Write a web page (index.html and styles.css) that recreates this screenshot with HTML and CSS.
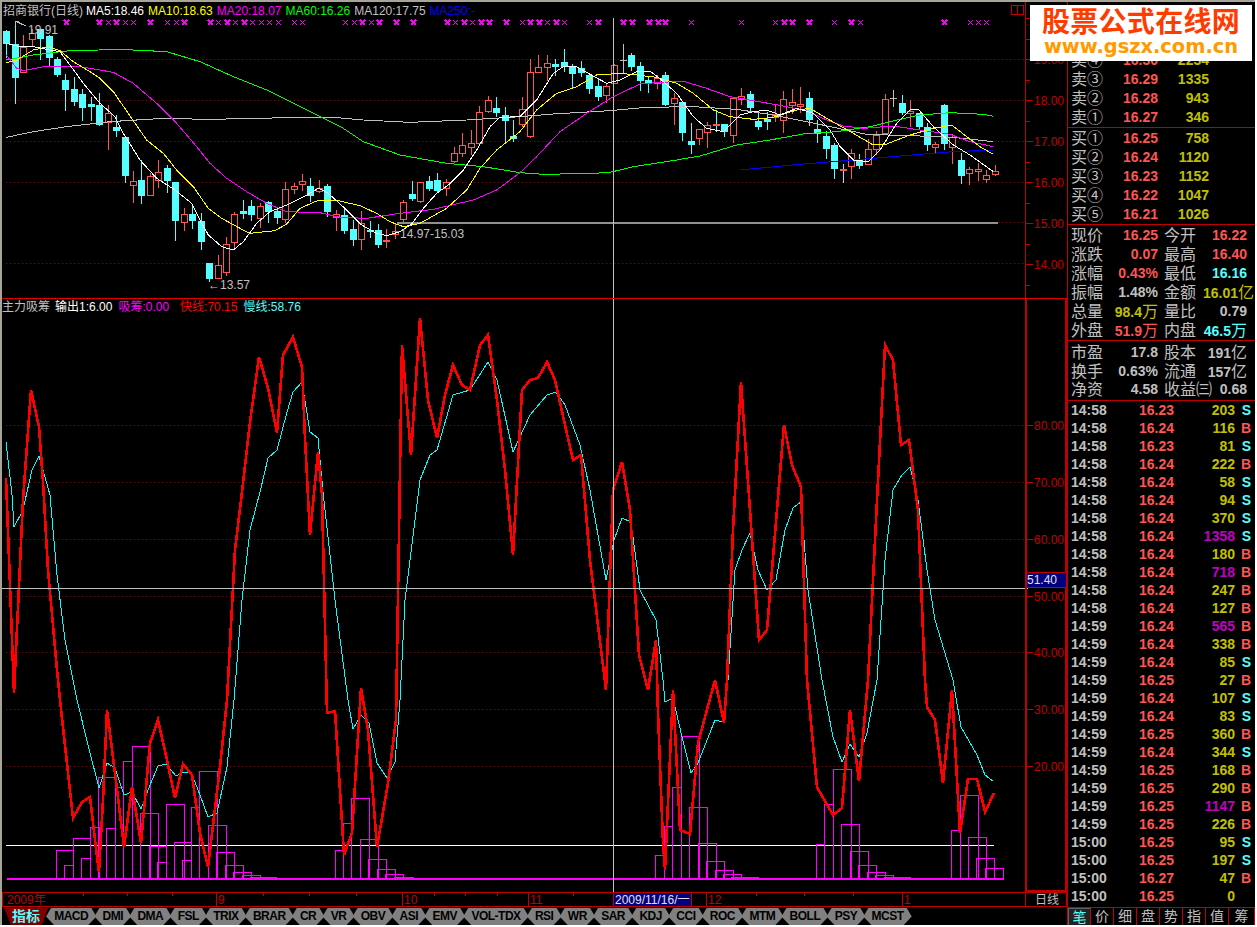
FILE: index.html
```html
<!DOCTYPE html>
<html lang="zh-CN">
<head>
    <meta charset="UTF-8">
    <title>招商银行(日线)</title>
    <link rel="stylesheet" href="styles.css">
</head>
<body>
    <div class="screen">
        <div class="main">
            <div class="charts">
                <div class="pane">
                    <svg id="pricePane" class="chart" width="1065" height="296" viewBox="2 2 1065 296"></svg>
                    <div class="legend price-legend">
                        <span class="gray">招商银行(日线)</span>
                        <span class="white">MA5:18.46</span>
                        <span class="yellow">MA10:18.63</span>
                        <span class="magenta">MA20:18.07</span>
                        <span class="green">MA60:16.26</span>
                        <span class="gray">MA120:17.75</span>
                        <span class="blue">MA250:-</span>
                    </div>
                    <div class="split-icon"><i></i><i></i></div>
                </div>
                <div class="pane">
                    <svg id="indicatorPane" class="chart" width="1065" height="594" viewBox="2 298 1065 594"></svg>
                    <div class="legend indicator-legend">
                        <span class="gray">主力吸筹</span>
                        <span class="white">输出1:6.00</span>
                        <span class="magenta">吸筹:0.00</span>
                        <span class="red">快线:70.15</span>
                        <span class="cyan">慢线:58.76</span>
                    </div>
                </div>
                <svg id="datePane" class="chart" width="1065" height="15" viewBox="2 892 1065 15"></svg>
            </div>

            <div class="side">
                <div class="book sell">
                    <div class="book-row"><span>卖⑤</span></div>
                    <div class="book-row"><span>卖④</span><b class="red">16.30</b><b class="olive">2234</b></div>
                    <div class="book-row"><span>卖③</span><b class="red">16.29</b><b class="olive">1335</b></div>
                    <div class="book-row"><span>卖②</span><b class="red">16.28</b><b class="olive">943</b></div>
                    <div class="book-row"><span>卖①</span><b class="red">16.27</b><b class="olive">346</b></div>
                </div>
                <div class="book buy">
                    <div class="book-row"><span>买①</span><b class="red">16.25</b><b class="olive">758</b></div>
                    <div class="book-row"><span>买②</span><b class="red">16.24</b><b class="olive">1120</b></div>
                    <div class="book-row"><span>买③</span><b class="red">16.23</b><b class="olive">1152</b></div>
                    <div class="book-row"><span>买④</span><b class="red">16.22</b><b class="olive">1047</b></div>
                    <div class="book-row"><span>买⑤</span><b class="red">16.21</b><b class="olive">1026</b></div>
                </div>
                <div class="quote">
                    <span>现价</span><b class="red">16.25</b><span>今开</span><b class="red">16.22</b>
                    <span>涨跌</span><b class="red">0.07</b><span>最高</span><b class="red">16.40</b>
                    <span>涨幅</span><b class="red">0.43%</b><span>最低</span><b class="cyan">16.16</b>
                    <span>振幅</span><b class="gray">1.48%</b><span>金额</span><b class="olive">16.01<em>亿</em></b>
                    <span>总量</span><b class="olive">98.4<em>万</em></b><span>量比</span><b class="gray">0.79</b>
                    <span>外盘</span><b class="red">51.9<em>万</em></b><span>内盘</span><b class="cyan">46.5<em>万</em></b>
                </div>
                <div class="quote fund">
                    <span>市盈</span><b class="gray">17.8</b><span>股本</span><b class="gray">191<em>亿</em></b>
                    <span>换手</span><b class="gray">0.63%</b><span>流通</span><b class="gray">157<em>亿</em></b>
                    <span>净资</span><b class="gray">4.58</b><span>收益㈢</span><b class="gray">0.68</b>
                </div>
                <div class="ticks">
                    <div class="tick"><b>14:58</b><b class="red">16.23</b><b class="olive">203</b><b class="cyan">S</b></div>
                    <div class="tick"><b>14:58</b><b class="red">16.24</b><b class="olive">116</b><b class="red">B</b></div>
                    <div class="tick"><b>14:58</b><b class="red">16.23</b><b class="olive">81</b><b class="cyan">S</b></div>
                    <div class="tick"><b>14:58</b><b class="red">16.24</b><b class="olive">222</b><b class="red">B</b></div>
                    <div class="tick"><b>14:58</b><b class="red">16.24</b><b class="olive">58</b><b class="cyan">S</b></div>
                    <div class="tick"><b>14:58</b><b class="red">16.24</b><b class="olive">94</b><b class="cyan">S</b></div>
                    <div class="tick"><b>14:58</b><b class="red">16.24</b><b class="olive">370</b><b class="cyan">S</b></div>
                    <div class="tick"><b>14:58</b><b class="red">16.24</b><b class="purple">1358</b><b class="cyan">S</b></div>
                    <div class="tick"><b>14:58</b><b class="red">16.24</b><b class="olive">180</b><b class="red">B</b></div>
                    <div class="tick"><b>14:58</b><b class="red">16.24</b><b class="purple">718</b><b class="red">B</b></div>
                    <div class="tick"><b>14:58</b><b class="red">16.24</b><b class="olive">247</b><b class="red">B</b></div>
                    <div class="tick"><b>14:58</b><b class="red">16.24</b><b class="olive">127</b><b class="red">B</b></div>
                    <div class="tick"><b>14:59</b><b class="red">16.24</b><b class="purple">565</b><b class="red">B</b></div>
                    <div class="tick"><b>14:59</b><b class="red">16.24</b><b class="olive">338</b><b class="red">B</b></div>
                    <div class="tick"><b>14:59</b><b class="red">16.24</b><b class="olive">85</b><b class="cyan">S</b></div>
                    <div class="tick"><b>14:59</b><b class="red">16.25</b><b class="olive">27</b><b class="red">B</b></div>
                    <div class="tick"><b>14:59</b><b class="red">16.24</b><b class="olive">107</b><b class="cyan">S</b></div>
                    <div class="tick"><b>14:59</b><b class="red">16.24</b><b class="olive">83</b><b class="cyan">S</b></div>
                    <div class="tick"><b>14:59</b><b class="red">16.25</b><b class="olive">360</b><b class="red">B</b></div>
                    <div class="tick"><b>14:59</b><b class="red">16.24</b><b class="olive">344</b><b class="cyan">S</b></div>
                    <div class="tick"><b>14:59</b><b class="red">16.25</b><b class="olive">168</b><b class="red">B</b></div>
                    <div class="tick"><b>14:59</b><b class="red">16.25</b><b class="olive">290</b><b class="red">B</b></div>
                    <div class="tick"><b>14:59</b><b class="red">16.25</b><b class="purple">1147</b><b class="red">B</b></div>
                    <div class="tick"><b>14:59</b><b class="red">16.25</b><b class="olive">226</b><b class="red">B</b></div>
                    <div class="tick"><b>15:00</b><b class="red">16.25</b><b class="olive">95</b><b class="cyan">S</b></div>
                    <div class="tick"><b>15:00</b><b class="red">16.25</b><b class="olive">197</b><b class="cyan">S</b></div>
                    <div class="tick"><b>15:00</b><b class="red">16.27</b><b class="olive">47</b><b class="red">B</b></div>
                    <div class="tick"><b>15:00</b><b class="red">16.25</b><b class="olive">0</b></div>
                </div>
            </div>
        </div>

        <div class="bottom">
            <div class="tabs">
                <a class="tab active">指标</a>
                <a class="tab">MACD</a>
                <a class="tab">DMI</a>
                <a class="tab">DMA</a>
                <a class="tab">FSL</a>
                <a class="tab">TRIX</a>
                <a class="tab">BRAR</a>
                <a class="tab">CR</a>
                <a class="tab">VR</a>
                <a class="tab">OBV</a>
                <a class="tab">ASI</a>
                <a class="tab">EMV</a>
                <a class="tab">VOL-TDX</a>
                <a class="tab">RSI</a>
                <a class="tab">WR</a>
                <a class="tab">SAR</a>
                <a class="tab">KDJ</a>
                <a class="tab">CCI</a>
                <a class="tab">ROC</a>
                <a class="tab">MTM</a>
                <a class="tab">BOLL</a>
                <a class="tab">PSY</a>
                <a class="tab">MCST</a>
            </div>
            <div class="side-tabs">
                <a class="current">笔</a><a>价</a><a>细</a><a>盘</a><a>势</a><a>指</a><a>值</a><a>筹</a>
            </div>
        </div>

        <div class="logo">
            <div class="logo-title">股票公式在线网</div>
            <div class="logo-url">www.gszx.com.cn</div>
        </div>
    </div>

    <script src="chart.js"></script>
</body>
</html>
```

FILE: styles.css
```css
body {
    margin: 0;
    background-color: #ffffff;
}

.screen {
    position: relative;
    box-sizing: border-box;
    width: 1255px;
    height: 925px;
    border-top: 2px solid #a8a498;
    border-left: 2px solid #a8a498;
    background-color: #000000;
    font-family: "Liberation Sans", "Noto Sans CJK SC", sans-serif;
    overflow: hidden;
}

.main {
    display: flex;
    height: 905px;
}

.charts {
    width: 1065px;
    flex: none;
}

.pane {
    position: relative;
    height: fit-content;
}

.chart {
    display: block;
}

.chart text {
    font-family: "Liberation Sans", "Noto Sans CJK SC", sans-serif;
    font-size: 12px;
}

/* series */
.line {
    fill: none;
    stroke-width: 1;
    shape-rendering: crispEdges;
}
.ma5 { stroke: #ffffff; }
.ma10 { stroke: #ffff00; }
.ma20 { stroke: #ff00ff; }
.ma60 { stroke: #00ff00; }
.ma120 { stroke: #c0c0c0; }
.ma250 { stroke: #0000ff; }
.fast { stroke: #ff0000; stroke-width: 2.6; }
.slow { stroke: #00ffff; }

.grid {
    stroke: #900000;
    stroke-width: 1;
    stroke-dasharray: 1 3;
    shape-rendering: crispEdges;
}
.frame {
    stroke: #c00000;
    fill: none;
    shape-rendering: crispEdges;
}
.split {
    stroke: #e00000;
    stroke-width: 1;
    shape-rendering: crispEdges;
}
.cross {
    stroke: #c0c0c0;
    stroke-width: 1;
    shape-rendering: crispEdges;
}
.support {
    stroke: #909090;
    stroke-width: 2;
    shape-rendering: crispEdges;
}
.base {
    stroke: #ffffff;
    stroke-width: 1;
    shape-rendering: crispEdges;
}
.bar {
    fill: none;
    stroke: #ff00ff;
    stroke-width: 1;
    shape-rendering: crispEdges;
}
.mark {
    stroke: #ff00ff;
    stroke-width: 1;
    shape-rendering: crispEdges;
}
.mark.heavy {
    stroke-width: 1.5;
}

.wick-up { stroke: #ff5555; shape-rendering: crispEdges; }
.wick-down { stroke: #55ffff; shape-rendering: crispEdges; }
.wick-flat { stroke: #c0c0c0; shape-rendering: crispEdges; }
.body-up { fill: #000000; stroke: #ff5555; shape-rendering: crispEdges; }
.body-down { fill: #55ffff; shape-rendering: crispEdges; }

.axis-label { fill: #c00000; }
.note { fill: #c0c0c0; }
.note-line { fill: none; stroke: #c0c0c0; shape-rendering: crispEdges; }
.date-label { fill: #c00000; }
.date-box { fill: #000080; stroke: #c00000; shape-rendering: crispEdges; }
.date-now { fill: #e0e0e0; }
.value-box { fill: #000080; stroke: #c00000; shape-rendering: crispEdges; }
.value-now { fill: #e0e0e0; }
.period { fill: #c0c0c0; }

.legend {
    position: absolute;
    display: flex;
    gap: 6px;
    font-size: 12px;
    line-height: 14px;
    white-space: nowrap;
}
.price-legend { top: 2px; left: 1px; gap: 4px; }
.price-legend span:first-child { margin-right: -1px; }
.indicator-legend { top: 2px; left: 0; }
.indicator-legend span:first-child { margin-right: -1px; }
.indicator-legend .magenta { margin-right: 5px; }

.white { color: #ffffff; }
.gray { color: #c0c0c0; }
.yellow { color: #ffff00; }
.magenta { color: #ff00ff; }
.green { color: #00ff00; }
.blue { color: #0000ff; }
.red { color: #ff5555; }
.cyan { color: #55ffff; }
.olive { color: #c0c000; }
.purple { color: #c000c0; }
.indicator-legend .red { color: #ff0000; }

.split-icon {
    position: absolute;
    top: 3px;
    left: 1010px;
    display: flex;
}
.split-icon i {
    display: block;
    width: 5px;
    height: 8px;
    border: 1px solid #c00000;
    margin-left: -1px;
}

/* right column */
.side {
    width: 188px;
    flex: none;
    box-sizing: border-box;
    border-left: 1px solid #c00000;
    color: #c0c0c0;
}

.side span {
    font-size: 16px;
    white-space: nowrap;
}

.side b {
    font-size: 14px;
    text-align: right;
}

.side em {
    font-style: normal;
    font-weight: normal;
    font-size: 16px;
}

.book {
    box-sizing: border-box;
    display: flex;
    flex-direction: column;
    justify-content: flex-end;
    border-bottom: 1px solid #c00000;
}
.sell { height: 126px; }
.buy { height: 97px; }

.book-row {
    display: grid;
    grid-template-columns: 40px 47px 51px;
    height: 19px;
    padding-left: 3px;
    line-height: 19px;
}

.quote {
    display: grid;
    grid-template-columns: 40px 47px 45px 44px;
    grid-auto-rows: 19px;
    padding-top: 1px;
    padding-left: 3px;
    height: 114px;
    line-height: 19px;
    border-bottom: 1px solid #c00000;
}
.quote span:nth-child(4n + 3) { padding-left: 6px; }
.quote b { white-space: nowrap; }

.fund {
    height: 57px;
    padding-top: 2px;
    grid-auto-rows: 18.7px;
}

.ticks {
    display: flex;
    flex-direction: column;
}

.tick {
    display: grid;
    grid-template-columns: 36px 67px 61px 16px;
    height: 18px;
    padding-left: 3px;
    line-height: 18px;
}
.tick b:first-child { text-align: left; }

/* bottom strip */
.bottom {
    display: flex;
    height: 18px;
}

.tabs {
    display: flex;
    width: 1065px;
    flex: none;
    padding-top: 1px;
    padding-left: 2px;
    box-sizing: border-box;
}

.tab {
    display: block;
    height: 17px;
    padding: 0 8.2px;
    margin-right: -2px;
    background-color: #808080;
    color: #000000;
    font-size: 12px;
    font-weight: bold;
    letter-spacing: -0.5px;
    line-height: 17px;
    clip-path: polygon(5px 0, calc(100% - 5px) 0, 100% 50%, calc(100% - 8px) 100%, 8px 100%, 0 50%);
}

.tab.active {
    width: 44px;
    box-sizing: border-box;
    padding: 0;
    margin-right: -2px;
    text-align: center;
    background-color: #800000;
    color: #55ffff;
    font-size: 14px;
    letter-spacing: 0;
    clip-path: polygon(0 0, 100% 0, 86% 100%, 16% 100%);
}

.side-tabs {
    display: flex;
    width: 188px;
    box-sizing: border-box;
    border-top: 1px solid #c00000;
    border-left: 1px solid #c00000;
}

.side-tabs a {
    width: 23px;
    box-sizing: border-box;
    border-right: 1px solid #c00000;
    color: #c0c0c0;
    font-size: 14px;
    line-height: 16px;
    text-align: center;
}
.side-tabs a:last-child { width: 26px; }
.side-tabs a.current {
    color: #55ffff;
    background-color: #222222;
    border-top: 1px solid #606060;
    border-left: 1px solid #606060;
}

.logo {
    position: absolute;
    top: 3px;
    left: 1028px;
    width: 222px;
    height: 56px;
    background-color: #ffffff;
    text-align: center;
}

.logo-title {
    color: #ff3c00;
    font-family: "Noto Sans CJK SC", sans-serif;
    font-size: 28px;
    font-weight: bold;
    letter-spacing: 0.3px;
    line-height: 31px;
}

.logo-url {
    color: #ff9a00;
    font-family: "DejaVu Sans", sans-serif;
    font-size: 19.4px;
    font-weight: bold;
    line-height: 22px;
}
```

FILE: chart.js
```js
const SVG_NS = "http://www.w3.org/2000/svg";

function add(parent, tag, attrs, text) {
    const node = document.createElementNS(SVG_NS, tag);
    for (const key in attrs) node.setAttribute(key, attrs[key]);
    if (text !== undefined) node.textContent = text;
    parent.appendChild(node);
    return node;
}

function hline(svg, cls, y, x1, x2) {
    add(svg, "line", { class: cls, x1: x1, x2: x2, y1: y, y2: y });
}

function vline(svg, cls, x, y1, y2) {
    add(svg, "line", { class: cls, x1: x, x2: x, y1: y1, y2: y2 });
}

function poly(svg, cls, pts) {
    add(svg, "polyline", { class: "line " + cls, points: pts.map(p => p.join(",")).join(" ") });
}

// candles and averages were read at 3x, so they are stored at 3x too
const third = (pts, dx = 0) => pts.map(p => [(p[0] + dx) / 3, p[1] / 3]);

// [high, body top, body bottom, low, u = up / d = down / f = flat]
const candles = [
    [90,94,132,175,"d"],[65,132,233,313,"d"],[105,140,217,217,"u"],[88,100,118,138,"u"],[88,88,116,180,"d"],
    [105,108,173,200,"d"],[170,177,225,230,"d"],[222,240,270,332,"d"],[232,267,305,318,"d"],[268,282,324,362,"d"],
    [290,312,321,362,"d"],[280,316,375,377,"d"],[315,340,367,450,"u"],[345,381,393,410,"d"],[411,411,527,548,"d"],
    [513,544,556,608,"u"],[480,540,587,612,"d"],[520,529,585,587,"u"],[480,517,541,565,"u"],[495,504,543,578,"d"],
    [546,546,662,722,"d"],[625,643,667,692,"u"],[612,642,662,686,"d"],[640,663,725,750,"d"],[790,790,836,845,"d"],
    [765,796,833,835,"u"],[712,733,815,828,"u"],[636,643,725,745,"u"],[600,633,641,657,"d"],[600,618,645,663,"d"],
    [610,619,653,684,"u"],[602,607,637,670,"d"],[625,633,654,672,"d"],[546,568,656,668,"u"],[548,559,566,582,"u"],
    [522,544,553,573,"u"],[533,558,588,607,"d"],[541,565,572,578,"u"],[552,558,636,650,"d"],[630,641,651,693,"u"],
    [620,646,693,703,"d"],[660,687,720,738,"d"],[633,669,716,750,"u"],[664,690,695,713,"d"],[672,691,736,744,"d"],
    [687,720,723,744,"u"],[672,694,703,716,"u"],[601,607,656,668,"u"],[544,582,597,603,"d"],[547,547,603,608,"u"],
    [528,543,567,572,"d"],[519,541,572,577,"d"],[537,547,565,588,"u"],[441,458,483,490,"u"],[400,436,458,470,"u"],
    [390,430,440,465,"u"],[318,337,428,430,"u"],[288,301,334,338,"u"],[291,324,339,352,"d"],[322,345,362,425,"d"],
    [360,408,416,425,"d"],[290,327,373,380,"u"],[178,217,407,413,"u"],[165,202,215,218,"u"],[165,190,202,243,"u"],
    [178,192,200,228,"d"],[147,186,200,215,"d"],[193,198,221,268,"d"],[183,205,218,230,"d"],[220,225,267,282,"d"],
    [235,258,290,303,"d"],[250,257,286,310,"u"],[192,196,250,252,"u"],[132,181,183,220,"f"],[160,165,201,213,"d"],
    [186,198,243,272,"d"],[232,240,253,278,"d"],[225,235,250,267,"u"],[216,225,316,318,"d"],[280,295,308,374,"u"],
    [306,306,398,423,"d"],[370,423,435,462,"d"],[388,388,413,434,"u"],[365,376,395,444,"u"],[330,373,375,395,"d"],
    [372,372,395,410,"d"],[290,294,404,428,"u"],[264,289,297,315,"u"],[273,282,324,333,"d"],[340,362,380,390,"d"],
    [336,358,365,390,"d"],[312,342,350,365,"u"],[272,298,361,398,"u"],[266,307,315,342,"u"],[261,313,318,340,"u"],
    [276,294,361,378,"d"],[360,388,401,428,"d"],[393,408,446,477,"d"],[428,435,507,537,"d"],[492,508,511,548,"d"],
    [447,460,497,537,"u"],[462,478,498,506,"d"],[418,448,493,496,"u"],[393,405,448,465,"u"],[282,298,400,404,"u"],
    [270,293,295,320,"f"],[285,309,339,345,"d"],[300,334,339,382,"u"],[340,340,382,390,"d"],[370,381,435,452,"d"],
    [425,433,440,462,"u"],[313,316,432,450,"d"],[403,412,440,491,"u"],[458,481,528,551,"d"],[502,506,520,554,"u"],
    [490,508,514,543,"u"],[510,524,536,548,"u"],[495,514,521,527,"u"]
];

const averages = {
    ma250: third([[660,510],[850,492],[1000,480],[1200,463],[1300,455],[1420,450]], 1560),
    ma120: third([[19,412],[100,395],[200,380],[330,365],[490,355],[620,358],[740,356],[890,352],[1000,352],[1090,360],[1230,367],[1400,360],[1560,350],
        [1660,342],[1830,332],[1940,322],[2080,320],[2210,328],[2320,345],[2420,365],[2600,403],[2760,408],[2860,412],[2980,425]]),
    ma60: third([[19,180],[100,165],[200,153],[360,148],[500,155],[600,185],[700,230],[800,270],[900,320],[960,350],[1030,385],[1090,425],[1200,465],[1340,490],[1450,500],[1560,518],
        [1630,523],[1780,520],[1830,517],[1900,500],[2030,480],[2100,468],[2210,435],[2310,420],[2410,402],[2510,395],[2610,380],[2700,358],[2760,345],[2850,338],[2950,343],[2980,349]]),
    ma20: third([[19,165],[50,205],[70,212],[130,200],[240,200],[340,217],[400,250],[470,310],[530,370],[590,440],[630,490],[680,535],[740,575],[800,610],[860,635],[960,638],[1020,652],[1100,655],[1200,640],[1300,628],[1420,600],[1490,570],[1560,518],
        [1610,470],[1680,395],[1760,340],[1840,290],[1920,252],[1980,247],[2050,244],[2120,265],[2190,290],[2260,302],[2350,318],[2420,333],[2480,360],[2530,378],[2590,385],[2680,378],[2760,390],[2850,403],[2910,425],[2980,440]]),
    ma10: third([[19,188],[50,180],[100,150],[145,140],[180,152],[220,185],[270,215],[300,235],[340,275],[395,355],[440,420],[490,460],[530,510],[580,560],[625,625],[665,655],[720,685],[750,700],[825,692],[860,672],[900,625],[950,603],[1010,601],[1080,617],[1130,640],[1170,665],[1210,680],[1260,670],[1340,625],[1400,570],[1440,505],[1490,450],[1560,395],
        [1610,330],[1670,280],[1730,260],[1790,225],[1860,220],[1910,225],[1970,232],[2030,250],[2080,280],[2140,330],[2190,350],[2260,358],[2320,352],[2390,330],[2430,325],[2480,355],[2560,400],[2620,435],[2660,432],[2730,405],[2800,385],[2855,375],[2900,410],[2940,440],[2980,463]]),
    ma5: third([[19,130],[60,140],[100,140],[150,150],[180,155],[210,195],[250,250],[300,310],[345,350],[370,400],[420,480],[470,535],[525,570],[575,610],[600,660],[625,705],[665,740],[700,750],[730,725],[770,670],[810,635],[860,615],[920,585],[955,565],[985,580],[1040,630],[1085,675],[1130,700],[1160,707],[1200,695],[1235,672],[1270,625],[1310,580],[1345,555],[1390,510],[1430,450],[1470,380],[1500,352],[1560,350],
        [1610,300],[1660,220],[1690,200],[1730,200],[1765,220],[1820,250],[1860,240],[1910,215],[1950,213],[1985,240],[2030,280],[2080,350],[2120,385],[2170,395],[2220,345],[2260,335],[2300,330],[2340,345],[2390,325],[2440,340],[2490,390],[2520,440],[2560,480],[2605,485],[2640,450],[2690,370],[2730,330],[2755,328],[2800,380],[2860,435],[2910,465],[2980,515]])
};

const marks = [199,298,323,349,375,400,451,502,528,553,629,654,680,705,731,756,782,807,833,882,907,1035,1061,1086,1112,1137,1188,1239,1340,1366,1391,1417,1442,1467,1517,
    1565,1591,1618,1641,1669,1692,1767,1795,1870,1897,1948,1973,1996,2073,2223,2325,2353,2377,2428,2501,2554,2579,2833,2910,2933,2957];
const heavyMarks = [199,298,349,451,553,629,680,731,1086,1137,1188,1239,1340,1391,1442,1467,1517,1591,1618,1669,1795,1870,1897,1948,1973,1996,2353,2377,2428,2554,2833];

function drawPrice() {
    const svg = document.getElementById("pricePane");

    [59.5, 100.5, 141.5, 182.5, 263.5].forEach(y => hline(svg, "grid", y, 6, 1025));
    hline(svg, "grid", 222.5, 998, 1025);

    candles.forEach((c, i) => {
        const x = Math.round((19 + 25.34 * i) / 3) + 0.5;
        const top = Math.round(c[1] / 3), bottom = Math.round(c[2] / 3);
        const kind = c[4] === "u" ? "up" : c[4] === "d" ? "down" : "flat";
        vline(svg, "wick-" + kind, x, c[0] / 3, c[3] / 3);
        if (kind === "flat") {
            hline(svg, "wick-flat", top + 0.5, x - 3.5, x + 3.5);
        } else if (bottom - top < 2) {
            add(svg, "rect", { class: "body-down", style: "fill:#ff5555", x: x - 3.5, y: top, width: 7, height: 2 });
        } else if (kind === "up") {
            add(svg, "rect", { class: "body-up", x: x - 3, y: top + 0.5, width: 6, height: bottom - top });
        } else {
            add(svg, "rect", { class: "body-down", x: x - 3.5, y: top, width: 7, height: bottom - top });
        }
    });

    hline(svg, "support", 223, 397, 998);
    vline(svg, "cross", 613.5, 18, 298);

    for (const name in averages) poly(svg, name, averages[name]);

    marks.forEach(m => {
        const x = Math.round(m / 3) + 0.5, y = 22.5, r = 2.5;
        const cls = heavyMarks.includes(m) ? "mark heavy" : "mark";
        add(svg, "path", { class: cls, d: `M${x - r} ${y - r}L${x + r} ${y + r}M${x + r} ${y - r}L${x - r} ${y + r}` });
    });

    add(svg, "path", { class: "note-line", d: "M15 21L26 26M15 21L19 21M15 21L16 25" });
    add(svg, "text", { class: "note", x: 28, y: 34 }, "19.91");
    add(svg, "text", { class: "note", x: 208, y: 289 }, "←13.57");
    add(svg, "text", { class: "note", x: 400, y: 238 }, "14.97-15.03");

    // price scale
    vline(svg, "frame", 1025, 2, 298);
    [59, 100, 141, 182, 223, 264].forEach((y, i) => {
        hline(svg, "frame", y + 0.5, 1025, 1033);
        add(svg, "text", { class: "axis-label", x: 1034, y: y + 5 }, (19 - i) + ".00");
    });
    for (let y = 18; y < 290; y += 20.5) {
        hline(svg, "frame", Math.round(y) + 0.5, 1025, 1030);
    }
}

const fast = [[6,478],[14,693],[23,500],[31,390],[39,427],[43,482],[48,570],[57,670],[60,700],[73,818],[82,802],[90,797],[95,840],[99,872],[103,800],[107,710],[115,773],[124,847],[132,787],[141,843],[150,743],[158,720],[167,760],[175,798],[183,764],[192,775],[200,833],[208,867],[220,767],[227,700],[235,550],[242,492],[250,422],[259,357],[268,388],[277,433],[283,355],[293,337],[302,367],[305,438],[310,535],[318,452],[322,495],[327,713],[335,711],[344,855],[352,833],[361,688],[368,730],[377,847],[388,783],[396,720],[402,345],[411,455],[420,318],[428,400],[437,438],[445,395],[453,365],[462,385],[470,390],[480,345],[488,335],[497,400],[505,470],[513,555],[522,390],[530,380],[538,378],[547,362],[555,380],[565,425],[573,460],[581,455],[590,560],[606,690],[613,490],[622,462],[630,510],[639,655],[648,690],[656,640],[658,713],[663,843],[665,870],[673,690],[680,830],[690,834],[698,743],[715,680],[724,723],[727,680],[733,530],[741,382],[750,510],[759,640],[767,630],[784,425],[792,465],[801,487],[807,680],[817,787],[833,815],[842,808],[850,710],[859,781],[868,680],[877,500],[885,345],[893,360],[901,445],[909,440],[918,510],[925,680],[927,707],[935,720],[943,783],[952,690],[960,833],[968,779],[977,779],[985,812],[994,793]];

const slow = [[6,442],[12,495],[14,527],[23,510],[27,492],[32,470],[39,456],[50,495],[57,575],[65,640],[77,700],[88,745],[99,788],[107,763],[115,768],[124,795],[132,792],[141,809],[150,785],[158,766],[166,764],[176,776],[183,772],[191,772],[200,795],[208,817],[217,813],[227,767],[234,700],[242,600],[250,530],[260,492],[268,458],[277,450],[287,412],[293,392],[302,382],[310,432],[318,438],[323,492],[335,600],[348,700],[353,729],[361,715],[369,723],[377,763],[387,778],[395,762],[400,700],[405,600],[420,480],[430,455],[437,450],[453,395],[470,390],[488,362],[497,380],[513,452],[530,415],[547,395],[556,392],[565,405],[580,445],[590,490],[606,580],[614,540],[622,518],[631,522],[640,590],[656,620],[663,680],[665,702],[673,698],[682,737],[691,773],[698,763],[715,720],[723,722],[728,680],[735,570],[742,550],[750,533],[758,570],[767,590],[776,580],[785,530],[793,508],[801,502],[808,590],[822,680],[833,737],[842,762],[850,744],[859,757],[867,733],[877,680],[885,560],[893,490],[902,475],[910,467],[918,500],[927,570],[935,620],[953,680],[961,727],[977,755],[985,775],[993,781]];

// [left, right, top] of each accumulation bar, again at 3x
const bars = [[169,220,451],[192,220,496],[220,271,415],[244,271,475],[271,297,381],[295,346,230],[319,346,385],[346,371,260],[370,397,184],[397,451,139],[421,475,340],[448,499,439],[472,499,487],[499,553,313],[523,574,427],[547,574,481],[574,598,322],[598,652,214],[625,680,376],[649,703,457],[676,730,496],[700,754,517],[727,781,526],[751,830,532],
    [1006,1030,451],[1030,1054,370],[1054,1108,295],[1081,1135,418],[1105,1159,478],[1132,1186,508],[1156,1210,523],[1183,1240,530],
    [1966,1993,526],[1993,2017,439],[2017,2044,322],[2044,2098,169],[2068,2122,382],[2095,2149,490],[2119,2173,544],[2146,2200,571],[2170,2224,583],[2194,2274,592],
    [2449,2473,493],[2473,2500,373],[2500,2554,268],[2524,2578,433],[2551,2605,514],[2575,2629,556],[2602,2656,577],[2626,2680,586],[2653,2730,592],
    [2854,2881,451],[2881,2935,346],[2905,2959,472],[2929,2983,535],[2956,3010,565]];

function drawIndicator() {
    const svg = document.getElementById("indicatorPane");

    const levels = [[425,"80.00"],[482,"70.00"],[539,"60.00"],[596,"50.00"],[652,"40.00"],[709,"30.00"],[766,"20.00"]];
    levels.forEach(l => hline(svg, "grid", l[0] + 0.5, 6, 1025));

    hline(svg, "base", 845.5, 6, 994);

    bars.forEach(b => {
        const top = Math.round(b[2] / 3 + (b[0] > 1900 ? 680 : 700));
        add(svg, "rect", {
            class: "bar",
            x: Math.round(b[0] / 3) + 0.5,
            y: top + 0.5,
            width: Math.round((b[1] - b[0]) / 3),
            height: 879 - top
        });
    });
    add(svg, "line", { class: "bar", style: "stroke-width:2", x1: 7, x2: 1003, y1: 879, y2: 879 });

    poly(svg, "slow", slow);
    poly(svg, "fast", fast);

    vline(svg, "cross", 613.5, 298, 892);
    hline(svg, "cross", 588.5, 2, 1028);

    // value scale
    add(svg, "line", { class: "frame", style: "stroke-width:2", x1: 1026, x2: 1026, y1: 298, y2: 892 });
    add(svg, "line", { class: "frame", style: "stroke-width:2", x1: 1066, x2: 1066, y1: 298, y2: 892 });
    levels.forEach(l => {
        hline(svg, "frame", l[0] + 0.5, 1025, 1033);
        add(svg, "text", { class: "axis-label", x: 1034, y: l[0] + 5 }, l[1]);
    });
    add(svg, "rect", { class: "value-box", x: 1026.5, y: 572.5, width: 40, height: 15 });
    add(svg, "text", { class: "value-now", x: 1027, y: 584 }, "51.40");
    add(svg, "line", { class: "frame", style: "stroke-width:2", x1: 1025, x2: 1067, y1: 891, y2: 891 });
    hline(svg, "split", 298.5, 2, 1067);
}

function drawDates() {
    const svg = document.getElementById("datePane");
    add(svg, "rect", { class: "frame", x: 2.5, y: 892.5, width: 1064, height: 14 });
    vline(svg, "frame", 1025.5, 892, 907);

    [83, 127, 172, 263, 309, 356, 434, 465, 497, 573, 756, 804, 853].forEach(x => vline(svg, "frame", x + 0.5, 892, 896));

    [[216, "9"], [402, "10"], [528, "11"], [706, "12"], [902, "1"]].forEach(d => {
        vline(svg, "frame", d[0] + 0.5, 892, 907);
        add(svg, "text", { class: "date-label", x: d[0] + 2, y: 904 }, d[1]);
    });
    add(svg, "text", { class: "date-label", x: 7, y: 904 }, "2009年");

    add(svg, "rect", { class: "date-box", x: 613.5, y: 892.5, width: 78, height: 14 });
    add(svg, "text", { class: "date-now", x: 615, y: 904 }, "2009/11/16/一");
    add(svg, "text", { class: "period", x: 1035, y: 904 }, "日线");
}

drawPrice();
drawIndicator();
drawDates();
```
